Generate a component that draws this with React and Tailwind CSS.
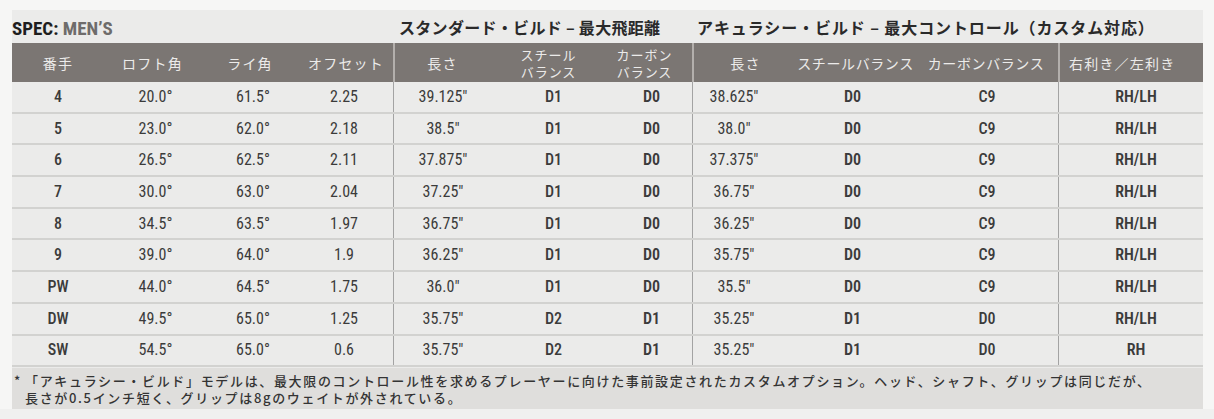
const rows = [
  ["4", "20.0°", "61.5°", "2.25", "39.125\"", "D1", "D0", "38.625\"", "D0", "C9", "RH/LH"],
  ["5", "23.0°", "62.0°", "2.18", "38.5\"", "D1", "D0", "38.0\"", "D0", "C9", "RH/LH"],
  ["6", "26.5°", "62.5°", "2.11", "37.875\"", "D1", "D0", "37.375\"", "D0", "C9", "RH/LH"],
  ["7", "30.0°", "63.0°", "2.04", "37.25\"", "D1", "D0", "36.75\"", "D0", "C9", "RH/LH"],
  ["8", "34.5°", "63.5°", "1.97", "36.75\"", "D1", "D0", "36.25\"", "D0", "C9", "RH/LH"],
  ["9", "39.0°", "64.0°", "1.9", "36.25\"", "D1", "D0", "35.75\"", "D0", "C9", "RH/LH"],
  ["PW", "44.0°", "64.5°", "1.75", "36.0\"", "D1", "D0", "35.5\"", "D0", "C9", "RH/LH"],
  ["DW", "49.5°", "65.0°", "1.25", "35.75\"", "D2", "D1", "35.25\"", "D1", "D0", "RH/LH"],
  ["SW", "54.5°", "65.0°", "0.6", "35.75\"", "D2", "D1", "35.25\"", "D1", "D0", "RH"],
];

const cellCls = [
  "flex items-center justify-center pl-[4px] font-medium",
  "flex items-center justify-center pl-[6px]",
  "flex items-center justify-center pl-[6px]",
  "flex items-center justify-center",
  "flex items-center justify-center border-l border-[#a3a3a3] pl-[2px]",
  "flex items-center justify-center pl-[12px] font-medium",
  "flex items-center justify-center pl-[6px] font-semibold",
  "flex items-center justify-center border-l border-[#a3a3a3] pr-[20px]",
  "flex items-center justify-center font-semibold",
  "flex items-center justify-center pl-[6px] font-medium",
  "flex items-center justify-center border-l border-[#a3a3a3] pl-[10px] font-semibold",
];

const grid =
  "grid grid-cols-[88px_105px_90px_98px_97px_115px_87px_103px_115px_148px_145px]";

export default function App() {
  return (
    <div className="w-[1214px] h-[419px] bg-[#f6f6f5] pt-[10px] overflow-hidden">
      <div className="mx-[12px] w-[1191px] bg-[#ebebea] font-['Noto_Sans_CJK_JP',sans-serif]">
        {/* title row */}
        <div className={grid + " h-[33px] items-center"}>
          <div className="col-span-4 pt-[3px] font-['Roboto',sans-serif] font-stretch-condensed font-bold text-[19px] leading-none">
            <span className="text-[#1e1e1e]">SPEC:</span>
            <span className="text-[#6e6c6b]"> MEN’S</span>
          </div>
          <div className="col-span-3 pl-[6px] font-bold text-[16px] text-[#2a2a2a] tracking-[0.3px] whitespace-nowrap">
            スタンダード・ビルド – 最大飛距離
          </div>
          <div className="col-span-4 pl-[5px] font-bold text-[16px] text-[#2a2a2a] tracking-[0.9px] whitespace-nowrap">
            アキュラシー・ビルド – 最大コントロール（カスタム対応）
          </div>
        </div>
        {/* header */}
        <div className={grid + " h-[39px] bg-[#7b7673] text-[#ecebea] text-[14px] tracking-[1.2px] leading-[16px]"}>
          <div className="flex items-center justify-center pl-[4px]">番手</div>
          <div className="flex items-center justify-center">ロフト角</div>
          <div className="flex items-center justify-center">ライ角</div>
          <div className="flex items-center justify-center pl-[4px]">オフセット</div>
          <div className="flex items-center justify-center border-l-2 border-[#b3afac]">長さ</div>
          <div className="flex flex-col items-center justify-center pl-[2px] text-[13px] leading-[17px] tracking-[1px]">
            <span>スチール</span>
            <span>バランス</span>
          </div>
          <div className="flex flex-col items-center justify-center pr-[8px] text-[13px] leading-[17px] tracking-[1px]">
            <span>カーボン</span>
            <span>バランス</span>
          </div>
          <div className="flex items-center justify-center border-l-2 border-[#b3afac] pl-[2px]">長さ</div>
          <div className="flex items-center justify-center whitespace-nowrap pl-[6px] tracking-[0.6px]">スチールバランス</div>
          <div className="flex items-center justify-center whitespace-nowrap pl-[4px] tracking-[0.6px]">カーボンバランス</div>
          <div className="flex items-center justify-start border-l-2 border-[#b3afac] pl-[9px] whitespace-nowrap">右利き／左利き</div>
        </div>
        {/* body */}
        <div className="font-['Roboto',sans-serif] font-stretch-condensed text-[16px] font-normal text-[#3b3b3b]">
          {rows.map((r, i) => (
            <div key={i} className={grid + " h-[31.7px] border-b-2 border-[#d2d2d0]"}>
              {r.map((v, j) => (
                <div key={j} className={cellCls[j]}>
                  {v}
                </div>
              ))}
            </div>
          ))}
        </div>
        {/* footnote */}
        <div className="bg-[#dfdedc] mt-[1px] h-[41px] pt-[4px] pl-[2px] text-[13px] leading-[17px] font-medium text-[#343434] tracking-[1.66px]">
          <div className="flex">
            <span className="w-[11px] shrink-0">*</span>
            <span className="whitespace-nowrap">「アキュラシー・ビルド」モデルは、最大限のコントロール性を求めるプレーヤーに向けた事前設定されたカスタムオプション。ヘッド、シャフト、グリップは同じだが、</span>
          </div>
          <div className="pl-[11px] whitespace-nowrap">長さが0.5インチ短く、グリップは8gのウェイトが外されている。</div>
        </div>
      </div>
      <div className="h-[20px] bg-[#f0f0ef]"></div>
    </div>
  );
}
